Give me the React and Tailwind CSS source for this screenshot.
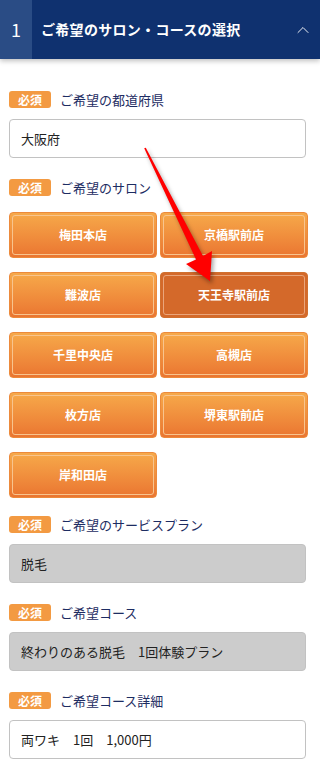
import { ChevronUp } from 'lucide-react';

const salons = [
  { name: '梅田本店' },
  { name: '京橋駅前店' },
  { name: '難波店' },
  { name: '天王寺駅前店', selected: true },
  { name: '千里中央店' },
  { name: '高槻店' },
  { name: '枚方店' },
  { name: '堺東駅前店' },
  { name: '岸和田店' },
];

const Label = ({ children }) => (
  <div className="flex items-center h-[17px]">
    <span className="flex items-center justify-center w-[42px] h-[17px] rounded-[3px] bg-[#f39a42] text-white text-[12px] font-bold leading-none">
      必須
    </span>
    <span className="ml-[9px] text-[13px] leading-none text-[#1d2c62]">{children}</span>
  </div>
);

const Field = ({ value, gray }) => (
  <div
    className={
      gray
        ? 'mt-[11px] w-[297px] h-[39px] flex items-center px-[11px] rounded-[4px] border border-[#c2c2c2] bg-[#cccccc] text-[13px] text-[#222]'
        : 'mt-[11px] w-[297px] h-[39px] flex items-center px-[11px] rounded-[4px] border border-[#c2c2c2] bg-white text-[13px] text-[#222]'
    }
  >
    {value}
  </div>
);

const SalonButton = ({ name, selected }) => (
  <button
    className={
      selected
        ? 'h-[46px] p-[2px] rounded-[4px] border border-[#d0702f] bg-[#d4692a]'
        : 'h-[46px] p-[2px] rounded-[4px] border border-[#ec8a3c] bg-gradient-to-b from-[#f6a94a] to-[#ea7531]'
    }
  >
    <span
      className={
        selected
          ? 'flex items-center justify-center h-full rounded-[3px] border border-[#eaa57a] text-white text-[12px] font-bold'
          : 'flex items-center justify-center h-full rounded-[3px] border border-[#f8c48e] text-white text-[12px] font-bold'
      }
    >
      {name}
    </span>
  </button>
);

const App = () => {
  return (
    <div
      className="relative w-[320px] min-h-[767px] bg-white overflow-hidden"
      style={{ fontFamily: '"Noto Sans CJK JP", "Noto Sans", sans-serif' }}
    >
      <div className="flex h-[59px] bg-[#0f316f] text-white shadow-[0_2px_5px_rgba(0,0,0,0.25)]">
        <div className="flex items-center justify-center w-[32px] bg-[#2a4c85] text-[18px]">1</div>
        <div className="flex-1 flex items-center pl-[9px] text-[14px] font-bold tracking-[0.3px]">
          ご希望のサロン・コースの選択
        </div>
        <div className="flex items-center pr-[7px]">
          <ChevronUp size={20} strokeWidth={1.1} />
        </div>
      </div>

      <div className="pl-[9px] pr-[12px] pt-[32px]">
        <Label>ご希望の都道府県</Label>
        <Field value="大阪府" />

        <div className="mt-[21px]">
          <Label>ご希望のサロン</Label>
        </div>
        <div className="mt-[16px] grid grid-cols-2 gap-x-[3px] gap-y-[14px]">
          {salons.map((s) => (
            <SalonButton key={s.name} name={s.name} selected={s.selected} />
          ))}
        </div>

        <div className="mt-[18px]">
          <Label>ご希望のサービスプラン</Label>
        </div>
        <Field value="脱毛" gray />

        <div className="mt-[21px]">
          <Label>ご希望コース</Label>
        </div>
        <Field value="終わりのある脱毛　1回体験プラン" gray />

        <div className="mt-[21px]">
          <Label>ご希望コース詳細</Label>
        </div>
        <Field value="両ワキ　1回　1,000円" />
      </div>

      {/* red annotation arrow */}
      <svg
        className="absolute left-0 top-0 pointer-events-none"
        width="320"
        height="767"
        style={{ filter: 'drop-shadow(2px 3px 2px rgba(0,0,0,0.35))' }}
      >
        <polygon
          points="144.2,148.3 145.8,147.7 203,256 212,251 210,281 186,264 196,259.5"
          fill="#ff0000"
        />
      </svg>
    </div>
  );
};

export default App;
